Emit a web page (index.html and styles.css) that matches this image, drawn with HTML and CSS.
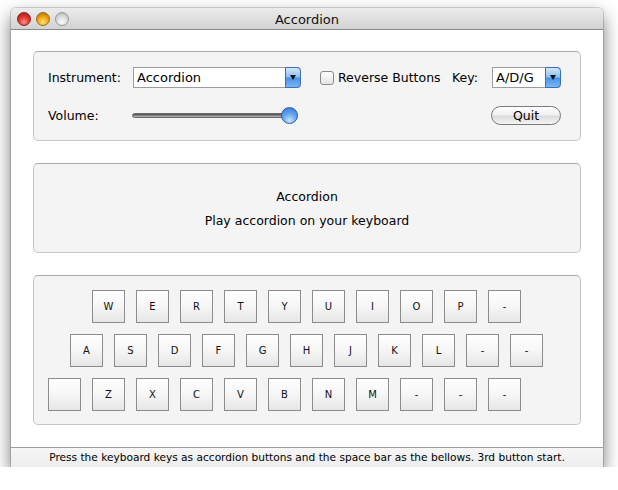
FILE: index.html
```html
<!DOCTYPE html>
<html>
<head>
<meta charset="utf-8">
<link rel="stylesheet" href="styles.css">
</head>
<body>
<div class="window">
  <div class="titlebar">
    <div class="lights">
      <span class="light red"></span>
      <span class="light yellow"></span>
      <span class="light gray"></span>
    </div>
    <div class="title">Accordion</div>
  </div>
  <div class="content">
    <div class="group controls">
      <div class="row">
        <span class="label lbl-instrument">Instrument:</span>
        <div class="popup popup-instrument"><span class="popup-text">Accordion</span><span class="popup-btn"><span class="arrow"></span></span></div>
        <div class="check-wrap"><span class="checkbox"></span><span class="label">Reverse Buttons</span></div>
        <span class="label lbl-key">Key:</span>
        <div class="popup popup-key"><span class="popup-text">A/D/G</span><span class="popup-btn"><span class="arrow"></span></span></div>
      </div>
      <div class="row row2">
        <span class="label lbl-volume">Volume:</span>
        <div class="slider"><div class="track"></div><div class="knob"></div></div>
        <div class="quit">Quit</div>
      </div>
    </div>
    <div class="group info">
      <div class="info-line">Accordion</div>
      <div class="info-line">Play accordion on your keyboard</div>
    </div>
    <div class="group keys">
      <div class="keyrow r1">
        <div class="key">W</div><div class="key">E</div><div class="key">R</div><div class="key">T</div><div class="key">Y</div><div class="key">U</div><div class="key">I</div><div class="key">O</div><div class="key">P</div><div class="key">-</div>
      </div>
      <div class="keyrow r2">
        <div class="key">A</div><div class="key">S</div><div class="key">D</div><div class="key">F</div><div class="key">G</div><div class="key">H</div><div class="key">J</div><div class="key">K</div><div class="key">L</div><div class="key">-</div><div class="key">-</div>
      </div>
      <div class="keyrow r3">
        <div class="key"></div><div class="key">Z</div><div class="key">X</div><div class="key">C</div><div class="key">V</div><div class="key">B</div><div class="key">N</div><div class="key">M</div><div class="key">-</div><div class="key">-</div><div class="key">-</div>
      </div>
    </div>
  </div>
  <div class="status">Press the keyboard keys as accordion buttons and the space bar as the bellows. 3rd button start.</div>
</div>
</body>
</html>
```

FILE: styles.css
```css
* { box-sizing: border-box; }
html, body { margin: 0; padding: 0; background: #ffffff; }
body {
  padding: 8px 0 0 11px;
  font-family: "DejaVu Sans", "Lucida Grande", sans-serif;
  color: #000;
}
.window {
  width: 592px;
  height: 459px;
  background: #ffffff;
  border-radius: 5px 5px 0 0;
  box-shadow: 0 8px 18px rgba(0,0,0,0.55), 0 0 0 1px rgba(0,0,0,0.15);
  display: flex;
  flex-direction: column;
  overflow: hidden;
}
.titlebar {
  height: 22px;
  flex: none;
  position: relative;
  background: linear-gradient(#ececec, #d2d2d2);
  border-bottom: 1px solid #8a8a8a;
  display: flex;
  align-items: center;
  justify-content: center;
}
.lights {
  position: absolute;
  left: 6px;
  top: 4px;
  display: flex;
  gap: 5px;
}
.light {
  width: 14px;
  height: 14px;
  border-radius: 50%;
  display: block;
}
.red { background: radial-gradient(circle at 50% 75%, #ff8f8a 0%, #e23a33 45%, #9c1410 100%); border: 1px solid #8e1d18; }
.yellow { background: radial-gradient(circle at 50% 75%, #ffe27a 0%, #f3a917 45%, #a86a05 100%); border: 1px solid #9a6a12; }
.gray { background: radial-gradient(circle at 50% 75%, #fafafa 0%, #d8d8d8 55%, #a9a9a9 100%); border: 1px solid #999; }
.title { font-size: 13px; color: #111; padding-top: 1px; }
.content {
  flex: 1;
  padding: 21px 22px 0 22px;
  display: flex;
  flex-direction: column;
  gap: 22px;
}
.group {
  background: #f4f4f4;
  border: 1px solid #c6c6c6;
  border-top-color: #a9a9a9;
  border-radius: 5px;
}
.controls {
  height: 90px;
  padding: 15px 0 0 14px;
  display: flex;
  flex-direction: column;
  gap: 18px;
}
.row { display: flex; align-items: center; height: 21px; }
.row2 { height: 19px; }
.label { font-size: 12.5px; }
.lbl-instrument { width: 85px; }
.lbl-volume { width: 84px; }
.lbl-key { width: 40px; }
.popup {
  height: 21px;
  display: flex;
  background: #fff;
  border: 1px solid #9c9c9c;
  border-right: none;
  border-radius: 0 4px 4px 0;
}
.popup-instrument { width: 168px; }
.popup-key { width: 69px; }
.popup-text { flex: 1; font-size: 13px; padding: 1px 0 0 3px; line-height: 18px; }
.popup-btn {
  width: 16px;
  margin: -1px 0;
  border: 1px solid #3a6fb8;
  border-radius: 0 4px 4px 0;
  background: linear-gradient(#d4e7fb 0%, #8fc0f3 45%, #4b92ea 55%, #7ab8f5 100%);
  display: flex;
  align-items: center;
  justify-content: center;
}
.arrow {
  width: 0; height: 0;
  border-left: 3.5px solid transparent;
  border-right: 3.5px solid transparent;
  border-top: 5px solid #111;
}
.check-wrap {
  width: 132px;
  margin-left: 19px;
  display: flex;
  align-items: center;
  gap: 4px;
}
.checkbox {
  width: 14px; height: 14px;
  border: 1px solid #8a8a8a;
  border-radius: 3px;
  background: linear-gradient(#ffffff, #e4e4e4);
  display: block;
}
.slider {
  width: 166px;
  height: 17px;
  position: relative;
  display: flex;
  align-items: center;
}
.track {
  width: 100%;
  height: 5px;
  border-radius: 3px;
  background: linear-gradient(#4a4a4a, #8a8a8a 60%, #c0c0c0);
  border: 1px solid #6a6a6a;
}
.knob {
  position: absolute;
  right: 0;
  top: 0;
  width: 17px;
  height: 17px;
  border-radius: 50%;
  border: 1px solid #2d5da8;
  background: radial-gradient(circle at 50% 85%, #c8e4ff 0%, #6aa9ef 45%, #2e72d2 100%);
}
.quit {
  margin-left: auto;
  margin-right: 19px;
  width: 70px;
  height: 19px;
  border: 1px solid #7a7a7a;
  border-radius: 10px;
  background: linear-gradient(#ffffff 0%, #f1f1f1 45%, #dcdcdc 55%, #f4f4f4 100%);
  font-size: 12.5px;
  text-align: center;
  line-height: 17px;
}
.info {
  height: 90px;
  display: flex;
  flex-direction: column;
  align-items: center;
  justify-content: center;
  padding-top: 1px;
}
.info-line { font-size: 12.5px; line-height: 24px; }
.keys {
  height: 150px;
  padding-top: 14px;
  display: flex;
  flex-direction: column;
  gap: 11px;
}
.keyrow { display: flex; gap: 11px; }
.r1 { margin-left: 58px; }
.r2 { margin-left: 36px; }
.r3 { margin-left: 14px; }
.key {
  width: 33px;
  height: 33px;
  border: 1px solid #8c8c8c;
  background: linear-gradient(#ffffff 0%, #f6f6f6 50%, #e6e6e6 100%);
  font-size: 10px;
  color: #111;
  display: flex;
  align-items: center;
  justify-content: center;
}
.status {
  height: 20px;
  flex: none;
  border-top: 1px solid #9c9c9c;
  background: linear-gradient(#f6f6f6, #ededed);
  font-size: 10.6px;
  text-align: center;
  line-height: 19px;
}
```
